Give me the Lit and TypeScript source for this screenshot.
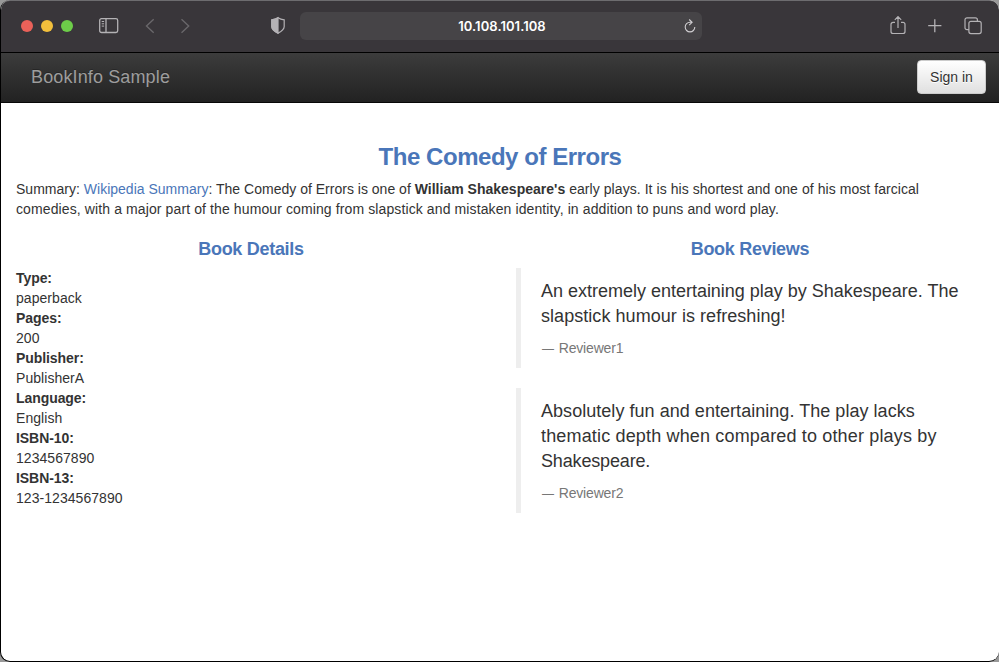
import { LitElement, html, css } from "lit";
import { customElement } from "lit/decorators.js";
import { styleMap } from "lit/directives/style-map.js";

@customElement("browser-toolbar")
class BrowserToolbar extends LitElement {
  static styles = css`
    :host { display: block; height: 53px; flex: none; }
    .bar {
      box-sizing: border-box; height: 53px; background: #39363a; display: grid;
      grid-template-columns: 299px 402px 1fr; align-items: center; padding-bottom: 2px;
      border-top: 1px solid #6d6c6f; border-bottom: 1px solid #000;
      border-top-left-radius: 9px; border-top-right-radius: 9px;
    }
    .left, .right { display: flex; align-items: center; height: 28px; }
    .left { padding-left: 20px; }
    .dot { width: 12px; height: 12px; border-radius: 50%; margin-right: 8px; flex: none; }
    .red { background: #ea6159; }
    .yellow { background: #f2bf3c; }
    .green { background: #6dcd49; }
    svg { display: block; fill: none; stroke: #b4b2b5; overflow: visible; flex: none; }
    .sidebar { margin-left: 18px; }
    .back { margin-left: 24px; stroke: #69676a; }
    .next { margin-left: 27px; stroke: #69676a; }
    .shield { margin-left: 71px; }
    .address {
      height: 28px; border-radius: 6px; background: #464447; display: grid;
      grid-template-columns: 1fr auto; align-items: center;
    }
    .url {
      text-align: center; color: #fff; font: 600 13px/28px Inter, "Liberation Sans", sans-serif;
      padding-left: 20px; letter-spacing: 0.05px;
    }
    .reload { margin-right: 6px; stroke: #d0ced1; }
    .right { justify-content: flex-end; padding-right: 17px; gap: 22px; }
  `;
  render() {
    return html`<div class="bar">
      <div class="left">
        <i class="dot red"></i><i class="dot yellow"></i><i class="dot green"></i>
        <svg class="sidebar" width="20" height="16" viewBox="0 0 20 16" stroke-width="1.3">
          <rect x=".7" y=".7" width="18" height="13.8" rx="1.8"/><path d="M7 .7v14"/><path d="M2.7 3.5h2.4M2.7 5.8h2.4M2.7 8.1h2.4" stroke-width="1"/>
        </svg>
        <svg class="back" width="15" height="16" viewBox="0 0 15 16" stroke-width="1.4"><path d="M10.7 1.3 3.5 8l7.2 6.7"/></svg>
        <svg class="next" width="15" height="16" viewBox="0 0 15 16" stroke-width="1.4"><path d="M-3.5 1.3 3.7 8l-7.2 6.7"/></svg>
        <svg class="shield" width="14" height="17" viewBox="0 0 14 17" stroke-width="1.2">
          <path d="M7 .8C5 2.2 3 2.7.8 2.9v6.5c0 3.2 3.5 5.3 6.2 6.7 2.7-1.4 6.2-3.5 6.2-6.7V2.9C11 2.7 9 2.2 7 .8z"/>
          <path d="M7 .8C5 2.2 3 2.7.8 2.9v6.5c0 3.2 3.5 5.3 6.2 6.7z" fill="#b4b2b5"/>
        </svg>
      </div>
      <div class="address">
        <span class="url">10.108.101.108</span>
        <svg class="reload" width="12" height="14" viewBox="0 0 12 14" stroke-width="1.1">
          <path d="M8 3.3H6A4.8 4.8 0 1 0 10.8 8.1M5.2 .5l2.9 2.8L5.2 6.1"/>
        </svg>
      </div>
      <div class="right">
        <svg width="16" height="19" viewBox="0 0 16 19" stroke-width="1.2">
          <path d="M5 6.4H3A2 2 0 0 0 1 8.4v7.1a2 2 0 0 0 2 2h10a2 2 0 0 0 2-2V8.4a2 2 0 0 0-2-2h-2M8 12V.8M4.8 3.9 8 .7l3.2 3.2"/>
        </svg>
        <svg width="14" height="14" viewBox="0 0 14 14" stroke-width="1.3"><path d="M6.8 .2v13M.2 6.7h13.2"/></svg>
        <svg width="18" height="18" viewBox="0 0 18 18" stroke-width="1.2">
          <rect x="4.9" y="4.4" width="12.3" height="12.2" rx="2"/>
          <path d="M4.9 12.7H3a2 2 0 0 1-2-2V2.8a2 2 0 0 1 2-2h8.4a2 2 0 0 1 2 2v1.6"/>
        </svg>
      </div>
    </div>`;
  }
}

/** A line of text and its tracking in pixels. */
type Line = [text: string, tracking: number];
interface Review { lines: Line[]; author: string; }

@customElement("book-page")
class BookPage extends LitElement {
  static styles = css`
    :host { display: block; color: #333; font: 14px/20px "Liberation Sans", Arial, sans-serif; }
    .navbar {
      box-sizing: border-box; height: 50px; display: flex; justify-content: space-between;
      align-items: center; padding: 0 13px 2px 30px; border-bottom: 1px solid #080808;
      background: linear-gradient(to bottom, #3c3c3c, #222);
    }
    .brand { font-size: 18px; letter-spacing: .13px; color: #9d9d9d; text-shadow: 0 -1px 0 rgba(0,0,0,.25); }
    button {
      box-sizing: border-box; width: 69px; height: 34px; padding: 0; border: 1px solid #ccc;
      border-radius: 4px; color: #333; font: inherit; text-shadow: 0 1px 0 #fff; white-space: nowrap;
      background: linear-gradient(to bottom, #fff, #e0e0e0);
    }
    .container { padding: 41px 15px 0; }
    h3, h4 { margin: 0; color: #4a76b9; text-align: center; font-weight: 700; }
    h3 { font-size: 24px; line-height: 26px; letter-spacing: -.46px; }
    h4 { font-size: 18px; line-height: 20px; margin-bottom: 9px; letter-spacing: -.29px; }
    p { margin: 9px 0 20px; white-space: nowrap; }
    .row { display: table; white-space: nowrap; }
    .first { letter-spacing: .01px; }
    .early { letter-spacing: .06px; }
    .second { letter-spacing: .11px; }
    a { color: #4a76b9; text-decoration: none; }
    .columns { display: grid; grid-template-columns: 470px 468px; column-gap: 30px; }
    dl, dd { margin: 0; }
    dt { font-weight: 700; letter-spacing: -.07px; }
    dd { letter-spacing: .05px; }
    blockquote { margin: 0 0 20px; padding: 11px 20px 10px; border-left: 5px solid #eee; font-size: 18px; line-height: 25px; }
    small { display: block; margin-top: 9px; font-size: 14px; line-height: 20px; color: #777; letter-spacing: -.17px; }
    .dash { display: inline-block; width: 13px; padding-left: 1px; font-size: 12px; line-height: 12px; }
  `;
  private details = [
    ["Type:", "paperback"], ["Pages:", "200"], ["Publisher:", "PublisherA"],
    ["Language:", "English"], ["ISBN-10:", "1234567890"], ["ISBN-13:", "123-1234567890"],
  ];
  private reviews: Review[] = [
    {
      lines: [["An extremely entertaining play by Shakespeare. The", -.01], ["slapstick humour is refreshing!", .05]],
      author: "Reviewer1",
    },
    {
      lines: [
        ["Absolutely fun and entertaining. The play lacks", .04],
        ["thematic depth when compared to other plays by", .16],
        ["Shakespeare.", -.16],
      ],
      author: "Reviewer2",
    },
  ];
  render() {
    return html`
      <nav class="navbar"><span class="brand">BookInfo Sample</span><button>Sign in</button></nav>
      <main class="container">
        <h3>The Comedy of Errors</h3>
        <p><span class="row first">Summary: <a>Wikipedia Summary</a>: The Comedy of Errors is one of <b>William Shakespeare's</b><span class="early"> early plays. It is his shortest and one of his most farcical</span></span>
        <span class="row second">comedies, with a major part of the humour coming from slapstick and mistaken identity, in addition to puns and word play.</span></p>
        <div class="columns">
          <section><h4>Book Details</h4>
            <dl>${this.details.map(([k, v]) => html`<dt>${k}</dt><dd>${v}</dd>`)}</dl>
          </section>
          <section><h4>Book Reviews</h4>
            ${this.reviews.map(r => html`<blockquote>${r.lines.map(([text, tracking]) =>
              html`<span class="row" style=${styleMap({ letterSpacing: `${tracking}px` })}>${text}</span>`)}<small><span class="dash">—</span> ${r.author}</small></blockquote>`)}
          </section>
        </div>
      </main>`;
  }
}

@customElement("app-root")
class AppRoot extends LitElement {
  static styles = css`
    :host { display: block; height: 662px; background: #999; overflow: hidden; }
    .window {
      box-sizing: border-box; height: 662px; display: flex; flex-direction: column; overflow: hidden;
      border-left: 1px solid #000; border-bottom: 1px solid #000;
      border-radius: 10px; background: #fff;
    }
  `;
  render() {
    return html`<div class="window"><browser-toolbar></browser-toolbar><book-page></book-page></div>`;
  }
}
